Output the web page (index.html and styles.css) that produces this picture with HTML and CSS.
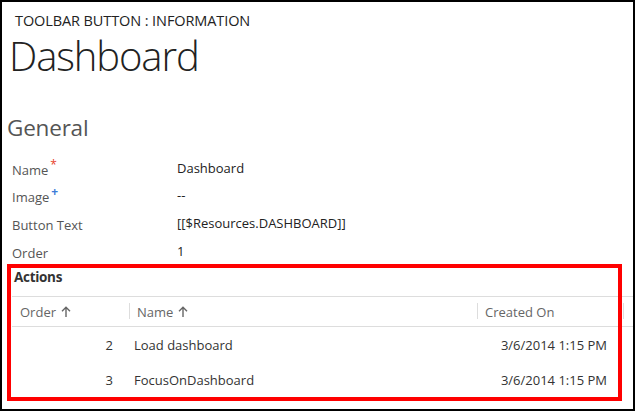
FILE: index.html
```html
<!DOCTYPE html>
<html>
<head>
<meta charset="utf-8">
<link rel="stylesheet" href="styles.css">
</head>
<body>
<div class="page">
  <div class="entity">TOOLBAR BUTTON : INFORMATION</div>
  <h1 class="title">Dashboard</h1>
  <h2 class="section">General</h2>
  <div class="form">
    <div class="label">Name<span class="req">*</span></div><div class="value">Dashboard</div>
    <div class="label">Image<span class="rec">+</span></div><div class="value">--</div>
    <div class="label">Button Text</div><div class="value">[[$Resources.DASHBOARD]]</div>
    <div class="label">Order</div><div class="value">1</div>
  </div>
  <div class="subgrid">
    <div class="subtitle">Actions</div>
    <div class="grid">
      <div class="hcell first">Order <svg class="arrow" width="10" height="11" viewBox="0 0 10 11"><path d="M5 11V1.2M1 5.2L5 1.2L9 5.2" fill="none" stroke="#666" stroke-width="1.4"/></svg></div>
      <div class="hcell sep">Name <svg class="arrow" width="10" height="11" viewBox="0 0 10 11"><path d="M5 11V1.2M1 5.2L5 1.2L9 5.2" fill="none" stroke="#666" stroke-width="1.4"/></svg></div>
      <div class="hcell sep">Created On</div>
      <div class="hcell sep"></div>

      <div class="cell num">2</div>
      <div class="cell">Load dashboard</div>
      <div class="cell date">3/6/2014 1:15 PM</div>
      <div class="cell"></div>

      <div class="cell num">3</div>
      <div class="cell">FocusOnDashboard</div>
      <div class="cell date">3/6/2014 1:15 PM</div>
      <div class="cell"></div>
    </div>
  </div>
  <div class="highlight"></div>
</div>
</body>
</html>
```
FILE: styles.css
```css
html, body {
  margin: 0;
  padding: 0;
  background: #fff;
}
.page {
  position: relative;
  width: 635px;
  height: 411px;
  box-sizing: border-box;
  border: 2px solid #000;
  font-family: "Open Sans", "Noto Sans", sans-serif;
  color: #222;
  overflow: hidden;
}
.entity {
  margin: 9px 0 0 13px;
  font-size: 14.5px;
  line-height: 19px;
  color: #222;
  letter-spacing: -0.1px;
}
.title {
  margin: 1px 0 0 7px;
  font-size: 40px;
  line-height: 50px;
  font-weight: 300;
  color: #222;
  letter-spacing: -1.1px;
}
.section {
  margin: 33px 0 0 5px;
  font-size: 22.5px;
  line-height: 28px;
  font-weight: 400;
  color: #555;
  letter-spacing: -0.2px;
}
.form {
  display: grid;
  grid-template-columns: 165px 1fr;
  grid-auto-rows: 27.6px;
  margin: 13px 0 0 10px;
  font-size: 13px;
  align-items: center;
}
.label {
  color: #555;
  position: relative;
  top: 1px;
}
.value {
  color: #222;
  top: -1px;
  position: relative;
}
.req, .rec {
  position: relative;
  top: -6px;
  margin-left: 2px;
  font-size: 12px;
}
.req { color: #e8412c; }
.rec { color: #3d7bd8; font-weight: 700; }
.subgrid {
  margin: 0 0 0 10px;
}
.subtitle {
  font-weight: 700;
  font-size: 13.5px;
  line-height: 18px;
  margin: 3px 0 0 2px;
  color: #333;
  letter-spacing: -0.3px;
}
.grid {
  margin-top: 10px;
  display: grid;
  grid-template-columns: 117px 348px 146px 1fr;
  border-top: 1px solid #ddd;
  font-size: 13px;
}
.hcell {
  height: 29px;
  display: flex;
  align-items: center;
  color: #666;
  border-bottom: 1px solid #ddd;
  padding-left: 8px;
  position: relative;
}
.hcell.sep::before {
  content: "";
  position: absolute;
  left: 0;
  top: 6px;
  height: 16px;
  border-left: 1px solid #ddd;
}
.arrow {
  margin-left: 5px;
  margin-top: -1px;
}
.cell {
  height: 35px;
  display: flex;
  align-items: center;
  color: #333;
  padding-left: 5px;
}
.cell.num {
  justify-content: flex-end;
  padding-right: 16px;
  padding-left: 0;
}
.cell.date {
  justify-content: flex-end;
  padding-right: 16px;
}
.highlight {
  position: absolute;
  left: 5px;
  top: 262px;
  width: 615px;
  height: 137px;
  box-sizing: border-box;
  border: 4px solid #f00;
  pointer-events: none;
}
```
